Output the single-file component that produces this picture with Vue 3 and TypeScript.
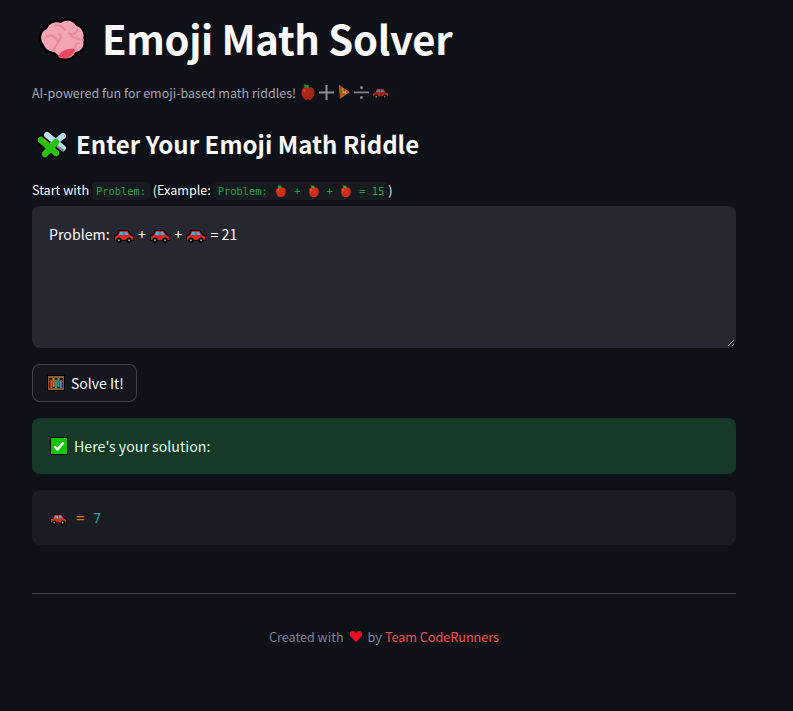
<template>
  <div class="page">
    <svg class="defs" aria-hidden="true">
      <symbol id="brain" viewBox="0 0 48 44">
        <path d="M6 27C1 21 3 13 9 11C11 5 18 3 23 5C28 1 36 3 38 8C44 9 47 16 45 22C47 28 43 34 37 34C35 40 28 42 22 39C18 35 16 33 12 33C9 32 7 30 6 27Z" fill="#000" stroke="#000" stroke-width="5" stroke-linejoin="round" />
        <path d="M6 27C1 21 3 13 9 11C11 5 18 3 23 5C28 1 36 3 38 8C44 9 47 16 45 22C47 28 43 34 37 34C35 40 28 42 22 39C18 35 16 33 12 33C9 32 7 30 6 27Z" fill="#f4a5b3" />
        <path d="M20 39C22 33 29 30 37 31C36 38 28 43 20 39Z" fill="#e9475f" />
        <path d="M17 7C22 7 25 9 27 12M8 19C13 15 18 19 20 24M15 33C17 29 18 27 21 23C23 20 23 19 22 16M31 15C34 18 39 15 40 12M33 18C36 21 42 21 45 22M37 30C37 27 39 25 41 25" fill="none" stroke="#e98a9c" stroke-width="2.2" stroke-linecap="round" />
      </symbol>
      <symbol id="puzzle" viewBox="0 0 30 28">
        <path d="M10 5L26 18M26 6L16 14M4 10L19 23M19 12L8 24" fill="none" stroke="#000" stroke-width="9.500" stroke-linecap="round" />
        <path d="M10 5L26 18M26 6L16 14" fill="none" stroke="#b9dcf0" stroke-width="6" stroke-linecap="round" />
        <path d="M20 16L27 21" fill="none" stroke="#7f8e99" stroke-width="2.500" />
        <path d="M4 10L19 23M19 12L8 24" fill="none" stroke="#27c10f" stroke-width="6.500" stroke-linecap="round" />
        <rect x="7" y="10" width="2" height="2" fill="#e08b2e" />
      </symbol>
      <symbol id="apple" viewBox="0 0 14 16">
        <path d="M7 4C4 2 .5 4 .5 8C.5 12 3 16 5 16C6 16 6.500 15.500 7 15.500C7.500 15.500 8 16 9 16C11 16 13.500 12 13.500 8C13.500 4 10 2 7 4Z" fill="#d42a1a" />
        <path d="M2 6C3 5 4 5 5 5L3 10Z" fill="#ee5a40" />
        <path d="M2.500 .5L7.500 1L8 4.500L4 4Z" fill="#3fa52a" />
      </symbol>
      <symbol id="plus" viewBox="0 0 15 15">
        <path d="M6.500 0H8.500V6.500H15V8.500H8.500V15H6.500V8.500H0V6.500H6.500Z" fill="#8c8f94" />
      </symbol>
      <symbol id="divide" viewBox="0 0 15 15">
        <rect y="6.500" width="15" height="1.800" fill="#7f8388" />
        <circle cx="7.500" cy="2.500" r="1.500" fill="#7f8388" />
        <circle cx="7.500" cy="12.500" r="1.500" fill="#7f8388" />
      </symbol>
      <symbol id="pizza" viewBox="0 0 13 17">
        <path d="M0 0L13 8.500L1.500 17Z" fill="#17130c" />
        <path d="M1 1.500L12 8.500L2 15.500Z" fill="#f2b04a" />
        <path d="M.5 .8L4 3L4.500 13L1.500 16Z" fill="#b8651b" />
        <circle cx="6.500" cy="6.500" r="1.300" fill="#c9371f" />
        <circle cx="6" cy="11" r="1.300" fill="#c9371f" />
        <circle cx="9" cy="8.500" r="1" fill="#c9371f" />
      </symbol>
      <symbol id="car" viewBox="0 0 20 13">
        <path d="M5 0H14L17 4L20 5.500V10.500H0V5.500L3 4Z" fill="#000" />
        <path d="M5.500 1H13.500L16 5L19 6.500V10H1V6.500L4 5Z" fill="#d62c1c" />
        <path d="M6.200 2H9.400V5H4.800ZM10.500 2H13L14.800 5H10.500Z" fill="#3fb0ee" />
        <circle cx="5" cy="10.300" r="2.700" fill="#000" />
        <circle cx="15" cy="10.300" r="2.700" fill="#000" />
        <circle cx="5" cy="10.300" r="1" fill="#9a9a9a" />
        <circle cx="15" cy="10.300" r="1" fill="#9a9a9a" />
      </symbol>
      <symbol id="abacus" viewBox="0 0 18 16">
        <rect width="18" height="16" fill="#000" />
        <rect x="1" y="1" width="16" height="14" fill="#8a5a35" />
        <rect x="2" y="3" width="14" height="10" fill="#2b1d15" />
        <rect x="3" y="5" width="2" height="8" fill="#d23b2c" />
        <rect x="5.500" y="3" width="2" height="9" fill="#e07b2e" />
        <rect x="8" y="5" width="2" height="8" fill="#36a24a" />
        <rect x="10.500" y="3" width="2" height="9" fill="#2f9aa8" />
        <rect x="13" y="5" width="2" height="8" fill="#3f7fd8" />
        <rect x="2" y="6" width="14" height="1" fill="#8a5a35" />
      </symbol>
      <symbol id="check" viewBox="0 0 18 18">
        <rect width="18" height="18" fill="#000" />
        <rect x="1" y="1" width="16" height="16" fill="#16c60c" />
        <path d="M4.500 9.500L7.500 12.500L13.500 5.500" fill="none" stroke="#fff" stroke-width="2.400" />
      </symbol>
      <symbol id="heart" viewBox="0 0 14 13">
        <path d="M7 13L1 7C-1 4 1 0 4 0C5.500 0 6.500 1 7 2C7.500 1 8.500 0 10 0C13 0 15 4 13 7Z" fill="#18090b" />
        <path d="M7 12L1.500 6.500C0 4 1.500 1 4 1C5.500 1 6.500 2.300 7 3.300C7.500 2.300 8.500 1 10 1C12.500 1 14 4 12.500 6.500Z" fill="#e81224" />
      </symbol>
    </svg>

    <h1 class="title">
      <svg class="brain"><use href="#brain" /></svg>
      <span>Emoji Math Solver</span>
    </h1>

    <p class="sub">
      AI-powered fun for emoji-based math riddles!
      <svg class="sub-apple"><use href="#apple" /></svg>
      <svg class="sub-op"><use href="#plus" /></svg>
      <svg class="sub-pizza"><use href="#pizza" /></svg>
      <svg class="sub-op sub-div"><use href="#divide" /></svg>
      <svg class="sub-car"><use href="#car" /></svg>
    </p>

    <h2 class="head">
      <svg class="puzzle"><use href="#puzzle" /></svg>
      <span>Enter Your Emoji Math Riddle</span>
    </h2>

    <p class="hint">
      Start with <code>Problem:</code> (Example:
      <code>Problem: <svg class="code-apple"><use href="#apple" /></svg> + <svg class="code-apple"><use href="#apple" /></svg> + <svg class="code-apple"><use href="#apple" /></svg> = 15</code>)
    </p>

    <div class="area">
      <span>Problem:</span>
      <template v-for="n in 3" :key="n">
        <svg class="area-car"><use href="#car" /></svg>
        <span>{{ n < 3 ? "+" : "= 21" }}</span>
      </template>
      <svg class="grip" viewBox="0 0 8 8"><path d="M7 1L1 7M7 5L5 7" stroke="#9a9aa0" stroke-width="1" /></svg>
    </div>

    <button class="btn" type="button">
      <svg class="abacus"><use href="#abacus" /></svg>
      <span>Solve It!</span>
    </button>

    <div class="ok">
      <svg class="check"><use href="#check" /></svg>
      <span>Here's your solution:</span>
    </div>

    <div class="res">
      <svg class="res-car"><use href="#car" /></svg>
      <span class="op">=</span>
      <span class="num">7</span>
    </div>

    <hr class="rule" />

    <p class="foot">
      Created with
      <svg class="heart"><use href="#heart" /></svg>
      by <span class="team">Team CodeRunners</span>
    </p>
  </div>
</template>

<script setup lang="ts">
</script>

<style>
html,
body {
  background: #0e1117;
}
</style>

<style scoped>
.page {
  width: 704px;
  margin-left: 32px;
  color: #fafafa;
  font-family: "Noto Sans CJK SC", sans-serif;
  font-size: 14px;
}
.defs {
  display: none;
}
.title {
  display: flex;
  align-items: flex-start;
  gap: 17px;
  height: 44px;
  margin: 0;
  padding: 16px 0 0 6px;
  font-size: 40px;
  font-weight: 700;
  letter-spacing: -0.35px;
  line-height: 44px;
}
.title span {
  margin-left: -1px;
}
.brain {
  width: 48px;
  height: 44px;
  margin-top: 2px;
}
.sub {
  display: flex;
  align-items: center;
  height: 20px;
  margin: 22px 0 0;
  color: #a3a8b4;
  font-size: 12.5px;
}
.sub-apple {
  width: 14px;
  height: 16px;
  margin-left: 5px;
  opacity: 0.78;
}
.sub-op {
  width: 15px;
  height: 15px;
  margin-left: 4px;
}
.sub-pizza {
  width: 13px;
  height: 16px;
  margin-left: 4px;
  opacity: 0.85;
}
.sub-div {
  margin-left: 3px;
}
.sub-car {
  width: 17px;
  height: 11px;
  margin-left: 3px;
  margin-top: 3px;
  opacity: 0.75;
}
.head {
  display: flex;
  align-items: center;
  gap: 9px;
  height: 30px;
  margin: 27px 0 0;
  padding-left: 5px;
  font-size: 24px;
  font-weight: 600;
  letter-spacing: 0.02px;
  line-height: 30px;
}
.puzzle {
  width: 30px;
  height: 28px;
}
.hint {
  height: 18px;
  margin: 22px 0 0;
  font-size: 12.6px;
  line-height: 18px;
  white-space: nowrap;
}
code {
  display: inline-block;
  height: 18px;
  padding: 0 4px;
  border-radius: 4px;
  background: #171b20;
  color: #1ea34a;
  font-family: "DejaVu Sans Mono", monospace;
  font-size: 10.4px;
  line-height: 18px;
}
.code-apple {
  width: 13.8px;
  height: 12px;
  vertical-align: -2px;
}
.area {
  position: relative;
  display: flex;
  align-items: flex-start;
  gap: 4.2px;
  height: 142px;
  margin-top: 7px;
  padding: 18px 17px 0;
  box-sizing: border-box;
  border-radius: 8px;
  background: #262730;
  font-size: 14.2px;
  line-height: 20px;
}
.area-car {
  width: 20px;
  height: 13px;
  margin-top: 6px;
}
.grip {
  position: absolute;
  right: 1px;
  bottom: 1px;
  width: 8px;
  height: 8px;
}
.btn {
  display: flex;
  align-items: center;
  gap: 6px;
  width: 105px;
  height: 38px;
  margin-top: 16px;
  padding: 0 0 0 14px;
  border: 1px solid rgba(250, 250, 250, 0.2);
  border-radius: 8px;
  background: #13161d;
  color: #fafafa;
  font: inherit;
}
.abacus {
  width: 18px;
  height: 16px;
}
.ok {
  display: flex;
  align-items: center;
  gap: 6px;
  height: 56px;
  margin-top: 16px;
  padding-left: 18px;
  border-radius: 8px;
  background: #173928;
  color: #dffde9;
  font-size: 14.2px;
}
.check {
  width: 18px;
  height: 18px;
}
.res {
  display: flex;
  align-items: center;
  height: 55px;
  margin-top: 16px;
  padding-left: 18px;
  border-radius: 8px;
  background: #1a1c24;
  font-family: "DejaVu Sans Mono", monospace;
  font-size: 14px;
}
.res-car {
  width: 17px;
  height: 11px;
  margin: 3px 9px 0 0;
}
.op {
  width: 17px;
  color: #e8700f;
}
.num {
  color: #1aa88c;
}
.rule {
  height: 0;
  margin: 48px 0 0;
  border: 0;
  border-top: 1px solid #3d4044;
}
.foot {
  display: flex;
  align-items: center;
  justify-content: center;
  height: 20px;
  margin: 32px 0 0;
  color: #808495;
  font-size: 12.6px;
}
.heart {
  width: 14px;
  height: 13px;
  margin: 0 5px;
}
.team {
  margin-left: 3px;
  color: #ff4b4b;
}
</style>
